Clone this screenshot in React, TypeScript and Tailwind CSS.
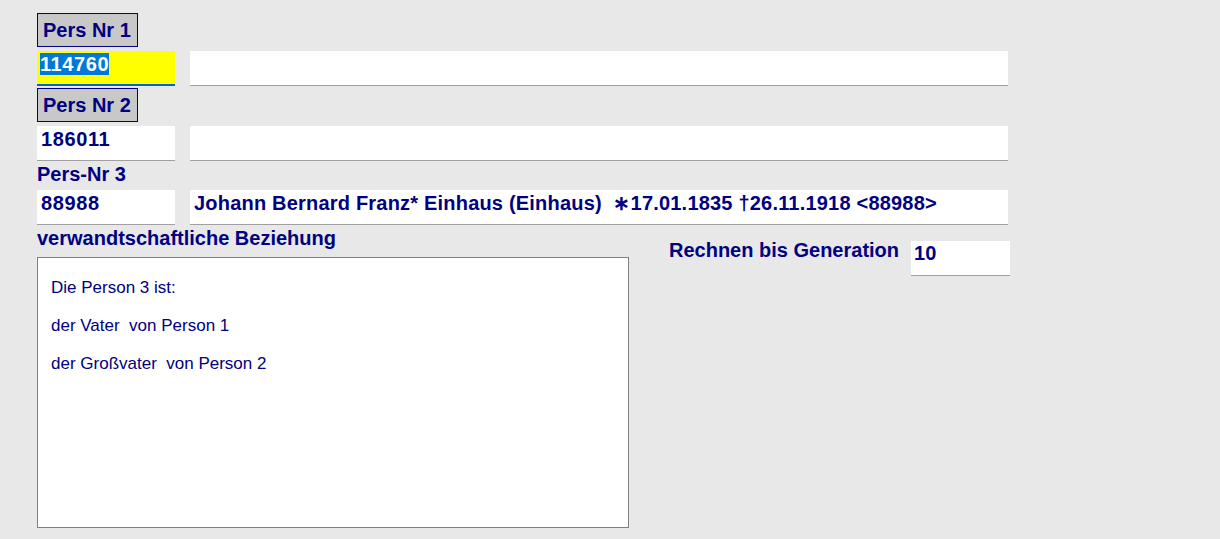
import React from 'react';

const navy = 'text-[#000080]';

const Btn: React.FC<{ label: string }> = ({ label }) => (
  <div className="w-[101px] h-[34px] border border-[#000080] bg-[#c8c8c8] flex items-center pl-[5px]">
    <span className={`${navy} font-bold text-[20px] leading-none`}>{label}</span>
  </div>
);

const Field: React.FC<{ w: string; children?: React.ReactNode }> = ({ w, children }) => (
  <div className={`${w} h-[35px] bg-white border-b border-[#a0a0a0] flex items-start pt-[2px] pl-[4px]`}>
    {children}
  </div>
);

export default function App() {
  return (
    <div className="w-[1220px] h-[539px] bg-[#e8e8e8] pl-[37px] pt-[13px] overflow-hidden" style={{ fontFamily: '"Liberation Sans", Arial, sans-serif' }}>
      <Btn label="Pers Nr 1" />
      <div className="flex gap-[15px] mt-[4px]">
        <div className="w-[138px] h-[35px] bg-[#ffff00] border-b-2 border-[#0066cc] pt-[2px] pl-[3px]">
          <span className="inline-block bg-[#0078d7] text-white font-bold text-[20px] leading-[22px] tracking-[0.6px]">114760</span>
        </div>
        <Field w="w-[818px]" />
      </div>
      <div className="mt-[2px]">
        <Btn label="Pers Nr 2" />
      </div>
      <div className="flex gap-[15px] mt-[4px]">
        <Field w="w-[138px]">
          <span className={`${navy} font-bold text-[20px] leading-[22px] tracking-[0.6px]`}>186011</span>
        </Field>
        <Field w="w-[818px]" />
      </div>
      <div className="h-[29px] pt-[2px]">
        <span className={`${navy} font-bold text-[20px] leading-[22px]`}>Pers-Nr 3</span>
      </div>
      <div className="flex gap-[15px]">
        <Field w="w-[138px]">
          <span className={`${navy} font-bold text-[20px] leading-[22px] tracking-[0.6px]`}>88988</span>
        </Field>
        <Field w="w-[818px]">
          <span className={`${navy} font-bold text-[20px] leading-[22px] whitespace-pre tracking-[0.2px]`}>
            {'Johann Bernard Franz* Einhaus (Einhaus)  \u221717.01.1835 \u202026.11.1918 <88988>'}
          </span>
        </Field>
      </div>
      <div className="flex">
        <div className="w-[592px]">
          <div className="h-[32px] pt-[2px]">
            <span className={`${navy} font-bold text-[20px] leading-[22px]`}>verwandtschaftliche Beziehung</span>
          </div>
          <div className="h-[271px] bg-white border border-[#808080] pl-[13px] pt-[11px]">
            <div className={`${navy} text-[17px] leading-[38px] whitespace-pre`}>
              <div>Die Person 3 ist:</div>
              <div>der Vater  von Person 1</div>
              <div>der Großvater  von Person 2</div>
            </div>
          </div>
        </div>
        <div className="flex items-start ml-[40px] mt-[16px]">
          <span className={`${navy} font-bold text-[20px] leading-[22px] -mt-[2px]`}>Rechnen bis Generation</span>
          <div className="ml-[12px] w-[99px] h-[35px] bg-white border-b border-[#a0a0a0] pt-[1px] pl-[3px]">
            <span className={`${navy} font-bold text-[20px] leading-[22px]`}>10</span>
          </div>
        </div>
      </div>
    </div>
  );
}
